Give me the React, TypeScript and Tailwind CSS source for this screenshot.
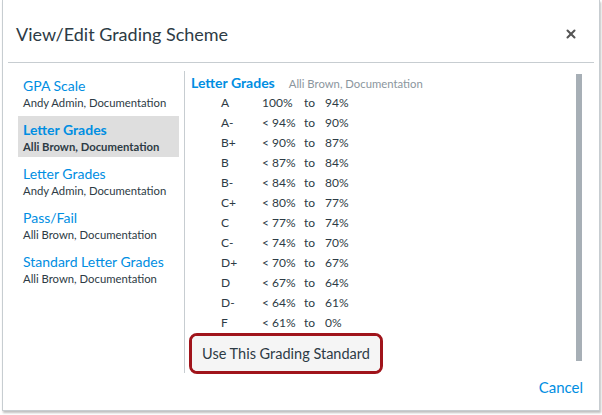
import { FiX } from 'react-icons/fi';

const schemes = [
  { name: 'GPA Scale', owner: 'Andy Admin, Documentation' },
  { name: 'Letter Grades', owner: 'Alli Brown, Documentation', active: true },
  { name: 'Letter Grades', owner: 'Andy Admin, Documentation' },
  { name: 'Pass/Fail', owner: 'Alli Brown, Documentation' },
  { name: 'Standard Letter Grades', owner: 'Alli Brown, Documentation' },
];

const grades = [
  ['A', '100%', '94%'],
  ['A-', '< 94%', '90%'],
  ['B+', '< 90%', '87%'],
  ['B', '< 87%', '84%'],
  ['B-', '< 84%', '80%'],
  ['C+', '< 80%', '77%'],
  ['C', '< 77%', '74%'],
  ['C-', '< 74%', '70%'],
  ['D+', '< 70%', '67%'],
  ['D', '< 67%', '64%'],
  ['D-', '< 64%', '61%'],
  ['F', '< 61%', '0%'],
];

export default function App() {
  return (
    <div className="w-[602px] h-[415px] bg-white font-['Lato','Liberation_Sans',sans-serif] text-[#2d3b45]">
      <div className="ml-[2px] w-[598px] h-[411px] border-x border-b border-[#c7cdd1] bg-white shadow-[1px_2px_2px_rgba(0,0,0,0.25)] flex flex-col">
        {/* header */}
        <div className="mx-[5px] h-[63px] border-b border-[#c7cdd1] flex items-center justify-between pl-[8px] pr-[16px] pt-[5px]">
          <h2 className="text-[18px] leading-[24px]">View/Edit Grading Scheme</h2>
          <FiX className="text-[#555] w-[14px] h-[14px]" strokeWidth={3.5} />
        </div>

        {/* body */}
        <div className="flex pl-[15px] pr-[17px] pt-[8px]">
          <ul className="w-[161px] pt-[1px]">
            {schemes.map((s, i) => (
              <li
                key={i}
                className={`h-[41px] mb-[3px] pl-[5px] pt-[4px] ${s.active ? 'bg-[#dedede]' : ''}`}
              >
                <div className={`text-[14px] leading-[19px] text-[#008ee2] ${s.active ? 'font-bold' : ''}`}>{s.name}</div>
                <div className={`text-[11.3px] leading-[16px] ${s.active ? 'font-bold' : ''}`}>{s.owner}</div>
              </li>
            ))}
          </ul>

          <div className="ml-[5px] flex-1 flex border-l border-[#c7cdd1] h-[302px]">
            <div className="flex-1 pl-[6px] pt-[2px]">
              <div className="flex items-baseline h-[20px] leading-[20px]">
                <span className="text-[14px] font-bold text-[#008ee2]">Letter Grades</span>
                <span className="ml-[14px] text-[11.3px] text-[#8b969e]">Alli Brown, Documentation</span>
              </div>
              {grades.map(([letter, from, to]) => (
                <div key={letter} className="flex h-[20px] items-center text-[12px]">
                  <span className="ml-[30px] w-[41px]">{letter}</span>
                  <span className="w-[42px]">{from}</span>
                  <span className="w-[21px]">to</span>
                  <span>{to}</span>
                </div>
              ))}
              <div className="ml-[-2px] w-[194px] h-[41px] rounded-[8px] border-[3px] border-[#a0141b]">
                <button className="w-full h-full rounded-[5px] bg-[#f5f5f5] text-[14.5px] text-[#2d3b45]">
                  Use This Grading Standard
                </button>
              </div>
            </div>
            <div className="w-[6px] mt-[3px] h-[287px] bg-[#a7afb6]" />
          </div>
        </div>

        {/* footer */}
        <div className="flex justify-end pr-[16px] pt-[4px]">
          <span className="text-[15px] leading-[20px] text-[#008ee2]">Cancel</span>
        </div>
      </div>
    </div>
  );
}
